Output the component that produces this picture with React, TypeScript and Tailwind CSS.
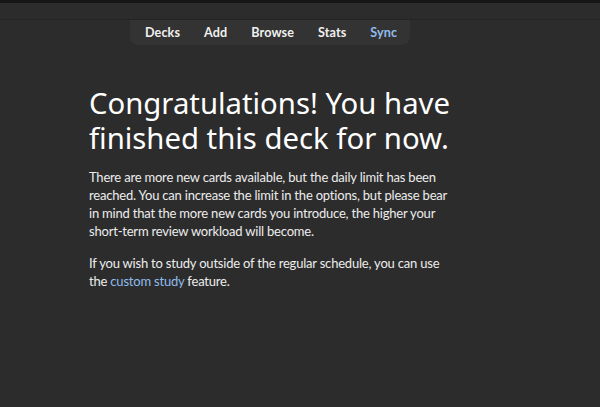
import React from 'react';

const NavItem = ({ label, active }: { label: string; active?: boolean }) => (
  <span className={active ? 'text-[#8fbcec]' : 'text-[#f0f0f0]'}>{label}</span>
);

const App = () => {
  return (
    <div className="w-[600px] h-[407px] bg-[#2c2c2c] font-['Lato',sans-serif] overflow-hidden">
      {/* top toolbar */}
      <div className="h-[3px] bg-[#161616]" />
      <div className="h-[17px] border-b border-[#242424] bg-[#2c2c2c]" />
      <div className="pl-[130px]">
        <nav className="w-[280px] h-[25px] bg-[#333333] rounded-b-[8px] flex items-center pt-[2px] pl-[15px] gap-[24px] text-[12.6px] font-bold tracking-[0.1px]">
          <NavItem label="Decks" />
          <NavItem label="Add" />
          <NavItem label="Browse" />
          <NavItem label="Stats" />
          <NavItem label="Sync" active />
        </nav>
      </div>

      {/* congrats body */}
      <div className="pl-[89px] pt-[41px] w-[470px]">
        <h1 className="font-['Noto_Sans',sans-serif] text-[29.3px] leading-[35px] text-white font-normal">
          Congratulations! You have finished this deck for now.
        </h1>
        <div className="text-[13px] leading-[18px] tracking-[-0.2px] text-[#ececec]">
          <p className="mt-[12px] w-[365px]">
            There are more new cards available, but the daily limit has been reached. You can increase the
            limit in the options, but please bear in mind that the more new cards you introduce, the higher
            your short-term review workload will become.
          </p>
          <p className="mt-[14px] w-[360px]">
            If you wish to study outside of the regular schedule, you can use the{' '}
            <span className="text-[#8fbcec]">custom study</span> feature.
          </p>
        </div>
      </div>
    </div>
  );
};

export default App;
